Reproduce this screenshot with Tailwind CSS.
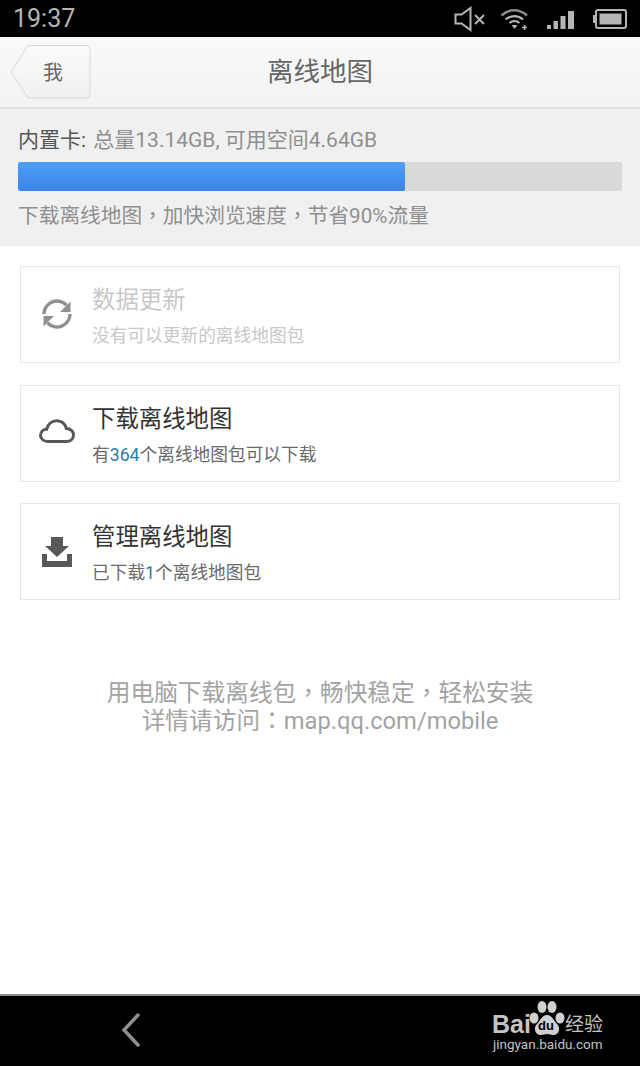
<!DOCTYPE html>
<html lang="zh-CN">
<head>
    <meta charset="UTF-8">
    <meta name="viewport" content="width=device-width, initial-scale=1.0">
    <title>离线地图</title>
    <script src="https://cdn.jsdelivr.net/npm/@tailwindcss/browser@4"></script>
</head>
<body class="bg-white font-['Roboto','Noto_Sans_CJK_SC',sans-serif]">
    <div class="w-[640px] h-[1066px] flex flex-col overflow-hidden">
        <!-- status bar -->
        <div class="h-[37px] bg-black flex items-center justify-between pl-[13px] pr-[13px] text-[#b5b5b5]">
            <span class="text-[25px] leading-none">19:37</span>
            <div class="flex items-center">
                <svg width="33" height="26" viewBox="0 0 33 26" fill="none" stroke="#b5b5b5" stroke-width="2" class="mr-[13px]">
                    <path d="M1.5 8.5h6l9-6.5v22l-9-6.5h-6z"/>
                    <path d="M21 9l9 9M30 9l-9 9"/>
                </svg>
                <svg width="30" height="24" viewBox="0 0 30 24" fill="none" stroke="#b5b5b5" class="mr-[17px]">
                    <path d="M1.5 8.5C9 1.5 19 1.5 27 8.5" stroke-width="2.4" stroke="#8a8a8a"/>
                    <path d="M5.5 12.5C11 8 18 8 23 12.5" stroke-width="2.2"/>
                    <path d="M9.5 16C12.5 13.5 16.5 13.5 19.5 16" stroke-width="2"/>
                    <path d="M11.5 18h6l-3 4z" fill="#b5b5b5" stroke="none"/>
                    <path d="M24.500 23v-5M22 20.500h5" stroke-width="1.500"/>
                </svg>
                <svg width="31" height="24" viewBox="0 0 31 24" fill="#b5b5b5" class="mr-[14px]">
                    <rect x="0" y="18" width="4" height="4"/>
                    <rect x="6.500" y="14" width="4.500" height="8"/>
                    <rect x="13.500" y="9" width="5" height="13"/>
                    <rect x="21" y="4" width="6" height="18" />
                </svg>
                <svg width="35" height="22" viewBox="0 0 35 22" fill="none">
                    <rect x="1" y="7" width="2" height="8" fill="#b5b5b5"/>
                    <rect x="4" y="2" width="30" height="18" rx="2" stroke="#b5b5b5" stroke-width="2"/>
                    <rect x="7.500" y="5.500" width="22" height="11" fill="#b5b5b5"/>
                </svg>
            </div>
        </div>

        <!-- title bar -->
        <div class="relative h-[72px] bg-gradient-to-b from-[#f9f9f9] to-[#f3f3f3] border-b-2 border-[#e2e2e2] flex items-center justify-center">
            <div class="absolute left-[10px] top-[8px] w-[81px] h-[54px]">
                <svg width="81" height="54" viewBox="0 0 81 54" class="absolute inset-0">
                    <defs>
                        <linearGradient id="back" x1="0" y1="0" x2="0" y2="1">
                            <stop offset="0" stop-color="#fbfbfb"/>
                            <stop offset="1" stop-color="#f0f0f0"/>
                        </linearGradient>
                    </defs>
                    <path d="M18 .5H77a3 3 0 0 1 3 3V50a3 3 0 0 1-3 3H18L1 27z" fill="url(#back)" stroke="#d8d8d8"/>
                </svg>
                <span class="absolute left-[33px] top-[14px] text-[20px] leading-[28px] text-[#666]">我</span>
            </div>
            <span class="text-[26.500px] leading-none text-[#666]">离线地图</span>
        </div>

        <!-- storage -->
        <div class="h-[137px] bg-[#f0f0f0] px-[18px] pt-[17px]">
            <p class="text-[21px] leading-[28px] text-[#8f8f8f] whitespace-nowrap"><span class="text-[#555] mr-[2px]">内置卡:</span> 总量13.14GB, 可用空间4.64GB</p>
            <div class="mt-[8px] h-[29px] w-[604px] bg-[#d9d9d9] rounded-[2px] overflow-hidden">
                <div class="h-full w-[387px] rounded-[2px] bg-gradient-to-b from-[#4f9ff6] to-[#3a84ea]"></div>
            </div>
            <p class="mt-[11px] text-[20.700px] leading-[28px] text-[#8f8f8f] whitespace-nowrap">下载离线地图<span lang="zh-TW" class="inline-block leading-none font-['Noto_Sans_CJK_TC']">，</span>加快浏览速度<span lang="zh-TW" class="inline-block leading-none font-['Noto_Sans_CJK_TC']">，</span>节省90%流量</p>
        </div>

        <!-- list -->
        <div class="px-[20px] pt-[20px] flex flex-col">
            <div class="h-[97px] border border-[#e6e6e6] flex items-center">
                <div class="w-[71px] flex justify-center -mt-[2px]">
                    <svg width="32" height="32" viewBox="0 0 32 32" fill="none" stroke="#909090" stroke-width="3.500">
                        <path d="M3 16A13 13 0 0 1 25.500 7.200"/>
                        <path d="M29 16A13 13 0 0 1 6.500 24.800"/>
                        <path d="M29.500 3.500v10.500H19z" fill="#909090" stroke="none"/>
                        <path d="M2.500 28.500V18H13z" fill="#909090" stroke="none"/>
                    </svg>
                </div>
                <div class="mt-[3px]">
                    <p class="text-[23.400px] leading-[32px] text-[#c8c8c8]">数据更新</p>
                    <p class="mt-[7px] text-[17.700px] leading-[26px] text-[#c8c8c8]">没有可以更新的离线地图包</p>
                </div>
            </div>

            <div class="mt-[22px] h-[97px] border border-[#e6e6e6] flex items-center">
                <div class="w-[71px] flex justify-center -mt-[6px]">
                    <svg width="36" height="24" viewBox="0 0 36 24" fill="none" stroke="#585858" stroke-width="3">
                        <path d="M9 22.500C4.500 22.500 1.500 19.800 1.500 16.300C1.500 12.800 4.200 10.300 7.700 10.200C9 5 13 1.700 17.800 1.700C22.800 1.700 26.300 5 27.300 9.500C31.500 9.500 34.500 12.500 34.500 16C34.500 19.800 31.500 22.500 27.500 22.500z"/>
                    </svg>
                </div>
                <div class="mt-[3px]">
                    <p class="text-[23.400px] leading-[32px] text-[#333]">下载离线地图</p>
                    <p class="mt-[7px] text-[17.700px] leading-[26px] text-[#6a6a6a]">有<span class="text-[#2b7f9f]">364</span>个离线地图包可以下载</p>
                </div>
            </div>

            <div class="mt-[21px] h-[97px] border border-[#e6e6e6] flex items-center">
                <div class="w-[71px] flex justify-center">
                    <svg width="30" height="30" viewBox="0 0 30 30" fill="#585858">
                        <path d="M9 0h12v9h6L15 20 3 9h6z"/>
                        <path d="M0 17h5v7h20v-7h5v13H0z"/>
                    </svg>
                </div>
                <div class="mt-[3px]">
                    <p class="text-[23.400px] leading-[32px] text-[#333]">管理离线地图</p>
                    <p class="mt-[7px] text-[17.700px] leading-[26px] text-[#6a6a6a]">已下载<span class="text-[#2b7f9f]">1</span>个离线地图包</p>
                </div>
            </div>
        </div>

        <!-- hint -->
        <div class="mt-[79px] text-center text-[23.700px] leading-[28px] text-[#a3a3a3]">
            <p>用电脑下载离线包<span lang="zh-TW" class="inline-block leading-none font-['Noto_Sans_CJK_TC']">，</span>畅快稳定<span lang="zh-TW" class="inline-block leading-none font-['Noto_Sans_CJK_TC']">，</span>轻松安装</p>
            <p>详情请访问<span lang="zh-TW" class="inline-block leading-none font-['Noto_Sans_CJK_TC']">：</span>map.qq.com/mobile</p>
        </div>

        <!-- nav bar -->
        <div class="relative mt-auto h-[72px] bg-black border-t-2 border-[#8c8c8c]">
            <svg width="20" height="34" viewBox="0 0 20 34" fill="none" stroke="#8f8f8f" stroke-width="3.500" stroke-linecap="round" class="absolute left-[121px] top-[17px]">
                <path d="M17 2L3 17l14 15"/>
            </svg>
            <!-- baidu watermark -->
            <div class="absolute left-[491px] top-[2px] w-[140px] h-[60px] text-[#c4c4c4]">
                <span class="absolute left-[1px] top-[16px] text-[25px] leading-[20px] font-bold font-['Liberation_Sans',sans-serif]">Bai</span>
                <svg width="44" height="44" viewBox="0 0 44 44" fill="#d0d0d0" class="absolute left-[33px] top-[0px]">
                    <ellipse cx="10" cy="20" rx="4.500" ry="5.500"/>
                    <ellipse cx="18" cy="9" rx="4.500" ry="6"/>
                    <ellipse cx="28" cy="9" rx="4.500" ry="6"/>
                    <ellipse cx="36" cy="20" rx="4.500" ry="5.500"/>
                    <path d="M23 17c5 0 7 6 10 9 4 4 2 11-4 11-2 0-4-1-6-1s-4 1-6 1c-6 0-8-7-4-11 3-3 5-9 10-9z"/>
                </svg>
                <span class="absolute left-[47px] top-[21px] text-[13px] leading-[14px] text-black font-bold font-['Liberation_Sans',sans-serif]">du</span>
                <span class="absolute left-[74px] top-[14px] text-[19px] leading-[26px]">经验</span>
                <span class="absolute left-[2px] top-[37px] text-[13.500px] leading-[18px] whitespace-nowrap">jingyan.baidu.com</span>
            </div>
        </div>
    </div>
</body>
</html>
